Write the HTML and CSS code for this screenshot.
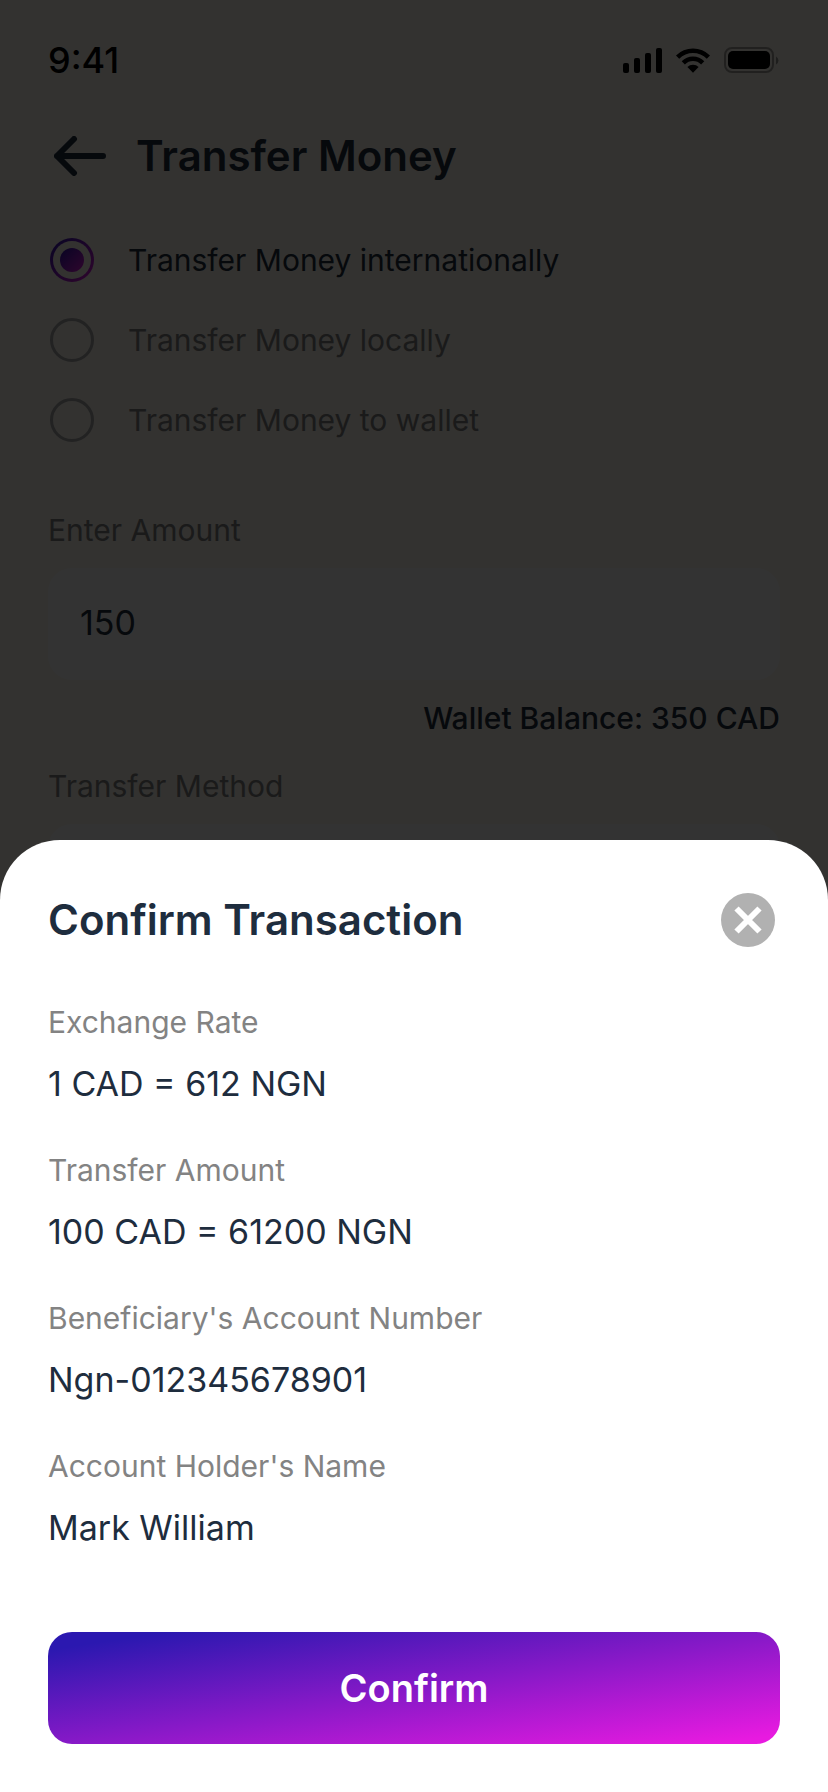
FILE: index.html
```
<!DOCTYPE html>
<html lang="en">
<head>
    <meta charset="UTF-8">
    <meta name="viewport" content="width=device-width, initial-scale=1.0">
    <title>Transfer Money</title>
    <link rel="stylesheet" href="styles.css">
</head>
<body>
    <div class="page">
        <div class="status-bar">
            <span class="time">9:41</span>
            <div class="status-icons">
                <svg width="39" height="26" viewBox="0 0 39 26">
                    <rect x="0" y="16" width="6" height="10" rx="2"/>
                    <rect x="11" y="11" width="6" height="15" rx="2"/>
                    <rect x="22" y="6" width="6" height="20" rx="2"/>
                    <rect x="33" y="1" width="6" height="25" rx="2"/>
                </svg>
                <svg width="36" height="26" viewBox="0 0 36 26">
                    <path d="M1 8.5a24 24 0 0 1 34 0l-3.200 3.200a19.500 19.500 0 0 0-27.600 0z"/>
                    <path d="M6.700 14.200a16 16 0 0 1 22.600 0l-3.200 3.200a11.500 11.500 0 0 0-16.200 0z"/>
                    <path d="M12.400 20a8 8 0 0 1 11.200 0L18 25.700z"/>
                </svg>
                <svg width="56" height="26" viewBox="0 0 56 26">
                    <rect x="1" y="1" width="48" height="24" rx="7" fill="none" stroke="#000" stroke-width="2" opacity="0.35"/>
                    <rect x="4" y="4" width="42" height="18" rx="5"/>
                    <path d="M52 9.500v8a4.500 4.500 0 0 0 0-8z" opacity="0.4"/>
                </svg>
            </div>
        </div>

        <div class="header">
            <button type="button" class="back" aria-label="Back">
                <svg width="52" height="40" viewBox="0 0 52 40">
                    <path d="M49 20H3M20 3L3 20l17 17"/>
                </svg>
            </button>
            <h1>Transfer Money</h1>
        </div>

        <form>
            <div class="options">
                <label class="option">
                    <input type="radio" name="type" value="international" checked>
                    <span>Transfer Money internationally</span>
                </label>
                <label class="option">
                    <input type="radio" name="type" value="local">
                    <span>Transfer Money locally</span>
                </label>
                <label class="option">
                    <input type="radio" name="type" value="wallet">
                    <span>Transfer Money to wallet</span>
                </label>
            </div>

            <div class="form-group">
                <label for="amount">Enter Amount</label>
                <input type="text" id="amount" class="field" value="150">
                <p class="balance">Wallet Balance: 350 CAD</p>
            </div>

            <div class="form-group">
                <label for="method">Transfer Method</label>
                <select id="method" class="field">
                    <option></option>
                </select>
            </div>
        </form>
    </div>

    <div class="overlay">
        <div class="sheet" role="dialog" aria-labelledby="sheet-title">
            <div class="sheet-header">
                <h2 id="sheet-title">Confirm Transaction</h2>
                <button type="button" class="close" aria-label="Close">
                    <svg width="54" height="54" viewBox="0 0 54 54">
                        <circle cx="27" cy="27" r="27" fill="#b1b1b1"/>
                        <path d="M15.500 15.500l23 23M38.500 15.500l-23 23" stroke="#fff" stroke-width="6"/>
                    </svg>
                </button>
            </div>

            <dl class="details">
                <div class="detail">
                    <dt>Exchange Rate</dt>
                    <dd>1 CAD = 612 NGN</dd>
                </div>
                <div class="detail">
                    <dt>Transfer Amount</dt>
                    <dd>100 CAD = 61200 NGN</dd>
                </div>
                <div class="detail">
                    <dt>Beneficiary's Account Number</dt>
                    <dd>Ngn-012345678901</dd>
                </div>
                <div class="detail">
                    <dt>Account Holder's Name</dt>
                    <dd>Mark William</dd>
                </div>
            </dl>

            <button type="button" class="confirm">Confirm</button>
        </div>
    </div>
</body>
</html>
```
FILE: styles.css
```
* {
    box-sizing: border-box;
}
body {
    margin: 0;
    background-color: #fcf8ef;
    color: #1e2d3e;
    font-family: Inter, Arial, sans-serif;
    font-size: 30px;
    line-height: 36px;
}
h1, h2, p, dl, dd {
    margin: 0;
}
h1, h2 {
    font-size: 42px;
    line-height: 40px;
    font-weight: 600;
}
button {
    padding: 0;
    border: none;
    background: none;
    font-family: inherit;
    cursor: pointer;
}
svg {
    display: block;
}
.page {
    padding: 40px 48px;
}
.status-bar {
    display: flex;
    justify-content: space-between;
    align-items: center;
    height: 40px;
    color: #000;
}
.time {
    font-size: 36px;
    font-weight: 500;
}
.status-icons {
    display: flex;
    gap: 13px;
}
.header {
    display: flex;
    align-items: center;
    gap: 30px;
    margin-top: 56px;
    padding-left: 6px;
}
.back path {
    fill: none;
    stroke: #1e2d3e;
    stroke-width: 6;
    stroke-linecap: round;
    stroke-linejoin: round;
}
.options {
    display: flex;
    flex-direction: column;
    gap: 36px;
    margin: 62px 0 70px;
}
.option {
    display: flex;
    align-items: center;
    gap: 34px;
    padding-left: 2px;
    color: #838383;
}
.option:has(input:checked) {
    color: #1e2d3e;
}
.option input {
    appearance: none;
    display: grid;
    place-items: center;
    width: 44px;
    height: 44px;
    margin: 0;
    border: 3px solid #a9a9a9;
    border-radius: 50%;
}
.option input:checked {
    border-color: transparent;
    background: linear-gradient(#fcf8ef, #fcf8ef) padding-box,
        linear-gradient(135deg, #2b18b0, #e81ae0) border-box;
}
.option input:checked::before {
    content: "";
    width: 24px;
    height: 24px;
    border-radius: 50%;
    background: linear-gradient(135deg, #2b18b0, #e81ae0);
}
.form-group {
    margin-bottom: 32px;
}
.form-group label {
    display: block;
    margin-bottom: 20px;
    color: #838383;
}
.field {
    display: block;
    appearance: none;
    width: 100%;
    height: 112px;
    padding: 0 32px 4px;
    border: none;
    border-radius: 24px;
    background-color: #fff;
    color: #1e2d3e;
    font-family: inherit;
    font-size: 34px;
}
.balance {
    margin-top: 20px;
    font-weight: 500;
    text-align: right;
}
.overlay {
    position: fixed;
    inset: 0;
    display: flex;
    align-items: flex-end;
    background-color: rgba(0, 0, 0, 0.8);
}
.sheet {
    width: 100%;
    padding: 52px 48px 48px;
    border-radius: 60px 60px 0 0;
    background-color: #fff;
}
.sheet-header {
    display: flex;
    justify-content: space-between;
    align-items: center;
    height: 56px;
    padding-right: 5px;
}
.details {
    display: flex;
    flex-direction: column;
    gap: 48px;
    margin: 56px 0 84px;
}
.detail {
    display: flex;
    flex-direction: column;
    gap: 24px;
}
.detail dt {
    color: #838383;
}
.detail dd {
    font-size: 34px;
    line-height: 40px;
}
.confirm {
    width: 100%;
    height: 112px;
    border-radius: 24px;
    background: linear-gradient(to bottom right, #2b18b0 8%, #e81ae0 96%);
    color: #fff;
    font-size: 38px;
    font-weight: 600;
}
```
